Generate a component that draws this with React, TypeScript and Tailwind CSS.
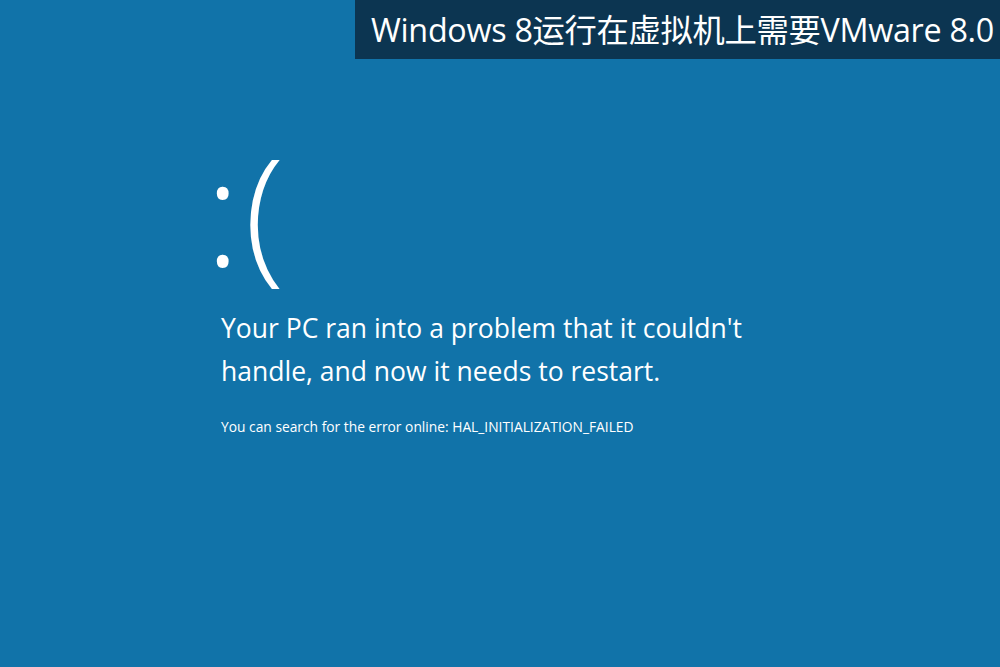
export default function App() {
  const font = { fontFamily: '"Open Sans", "Noto Sans", "Noto Sans CJK SC", sans-serif' };
  return (
    <div className="relative w-[1000px] h-[667px] overflow-hidden bg-[#1173a9] text-white" style={font}>
      <div className="absolute right-0 top-0 w-[645px] h-[59px] bg-[#0c3551] flex items-center pl-[16px]">
        <span className="text-[32.3px] leading-none tracking-[-0.3px] text-white" style={{ fontFamily: '"Open Sans", "Noto Sans CJK SC", sans-serif' }}>
          Windows 8运行在虚拟机上需要VMware 8.0
        </span>
      </div>
      <div className="pt-[119px] pl-[203px] flex flex-col">
        <div className="text-[148px] leading-[180px] font-light">
          <span className="mr-[4px] ml-[2px]">:</span>(
        </div>
        <div className="mt-[8px] pl-[18px] text-[26.5px] leading-[43px] font-normal">
          <div>Your PC ran into a problem that it couldn't</div>
          <div>handle, and now it needs to restart.</div>
        </div>
        <div className="mt-[24px] pl-[18px] text-[13.8px] font-normal">
          You can search for the error online: HAL_INITIALIZATION_FAILED
        </div>
      </div>
    </div>
  );
}
